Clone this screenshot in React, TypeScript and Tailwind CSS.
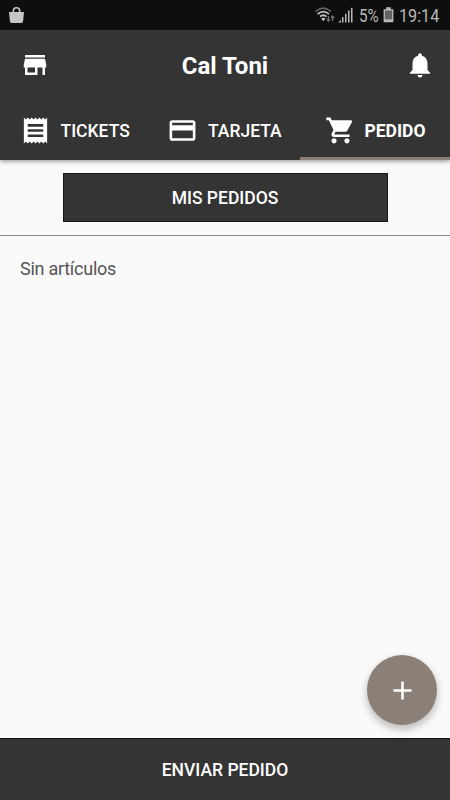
import React from "react";
import { MdStore, MdNotifications, MdReceipt, MdCreditCard, MdShoppingCart, MdAdd } from "react-icons/md";

function StatusBar() {
  return (
    <div className="flex h-[30px] items-center bg-[#0e0e0e] pl-[9px] pr-[10px] text-[#b9b9b9]">
      <svg width="15" height="17" viewBox="0 0 15 17" className="shrink-0">
        <path d="M0 5h15l-.9 9.2a2 2 0 0 1-2 1.8H2.9a2 2 0 0 1-2-1.8z" fill="#c6c6c6" />
        <path d="M4.3 6V4a3.2 3.2 0 0 1 6.4 0v2" fill="none" stroke="#c6c6c6" strokeWidth="1.6" />
      </svg>
      <svg width="20" height="16" viewBox="0 0 20 16" className="ml-auto shrink-0">
        <path d="M0.6 4.6Q8.3-2.4 16 4.6" fill="none" stroke="#666" strokeWidth="1.5" />
        <path d="M2.6 7.1Q8.3 2 14 7.1" fill="none" stroke="#c4c4c4" strokeWidth="1.7" />
        <path d="M5 9.7Q8.3 6.8 11.6 9.7" fill="none" stroke="#c4c4c4" strokeWidth="1.7" />
        <path d="M6.2 11.6Q8.3 9.8 10.4 11.6L8.3 14.2z" fill="#c4c4c4" />
        <path d="M13.4 9v5M11.7 12.2l1.7 2 1.7-2M17.6 14V9.3M15.9 11l1.7-2 1.7 2" fill="none" stroke="#707070" strokeWidth="1.2" />
      </svg>
      <svg width="15" height="16" viewBox="0 0 15 16" className="ml-[3px] shrink-0" fill="#b9b9b9">
        <path d="M0 15.5L3 13v2.5z" />
        <rect x="4" y="10" width="1.5" height="5.5" />
        <rect x="7" y="6.8" width="1.5" height="8.7" />
        <rect x="10" y="3.6" width="1.5" height="11.9" />
        <rect x="13" y="0.8" width="1.5" height="14.7" />
      </svg>
      <div className="ml-[6px] w-5 shrink-0">
        <span className="block origin-left scale-x-[0.82] whitespace-nowrap pt-px text-[18.5px] leading-[30px]">5%</span>
      </div>
      <svg width="11" height="16" viewBox="0 0 11 16" className="ml-[4px] shrink-0">
        <path d="M3.2 0.3h4.6v2H10.4v13H.6v-13H3.2z" fill="#b9b9b9" />
        <rect x="1.9" y="3.6" width="7.2" height="8.8" fill="#636363" />
      </svg>
      <div className="ml-[5px] w-[41px] shrink-0">
        <span className="block origin-left scale-x-[0.875] whitespace-nowrap pt-px text-[18.5px] leading-[30px]">19:14</span>
      </div>
    </div>
  );
}

export default function App() {
  const tabs = [
    { label: "TICKETS", Icon: MdReceipt, style: "pl-5 font-medium", gap: "ml-[9.5px]", active: false },
    { label: "TARJETA", Icon: MdCreditCard, style: "pl-[17px] font-medium", gap: "ml-[10px]", active: false },
    { label: "PEDIDO", Icon: MdShoppingCart, style: "pl-[25px] font-bold", gap: "ml-[8.5px]", active: true },
  ];

  return (
    <div className="relative flex h-[800px] w-[450px] flex-col overflow-hidden bg-[#fafafa] font-['Roboto',sans-serif]">
      <StatusBar />

      <header className="z-10 bg-[#343434] text-white shadow-[0_1px_5px_rgba(0,0,0,0.45)]">
        <div className="grid h-[70px] grid-cols-[60px_1fr_60px] items-center">
          <MdStore className="ml-5 size-[30px]" />
          <h1 className="pt-px text-center text-[24px] font-bold leading-none">Cal Toni</h1>
          <MdNotifications className="ml-[15px] size-[30px]" />
        </div>
        <nav className="grid h-[60px] grid-cols-3">
          {tabs.map(({ label, Icon, style, gap, active }) => (
            <div
              key={label}
              className={`flex items-center border-b-[3px] pt-[3px] text-[17.5px] ${style} ${active ? "border-[#8d8078]" : "border-transparent"}`}
            >
              <Icon className="size-[31px] shrink-0" />
              <span className={`pt-[2px] ${gap}`}>{label}</span>
            </div>
          ))}
        </nav>
      </header>

      <div className="flex h-[76px] justify-center border-b border-[#8b8b8b] pt-[13px]">
        <button className="h-[49px] w-[325px] border border-[#171717] bg-[#343434] pt-[2px] text-[17.5px] font-medium text-white">
          MIS PEDIDOS
        </button>
      </div>

      <main className="flex-1 px-5 pt-[21px]">
        <p className="text-[18px] leading-6 tracking-[-0.26px] text-[#555]">Sin artículos</p>
      </main>

      <button className="absolute bottom-[75px] right-[13px] flex size-[70px] items-center justify-center rounded-full bg-[#8b8077] text-white shadow-[0_4px_8px_rgba(0,0,0,0.28)]">
        <MdAdd className="size-[31px]" />
      </button>

      <footer className="h-[62px] shrink-0 border-t border-[#111] bg-[#343434] text-white">
        <button className="h-full w-full pt-[2px] text-[17.5px] font-medium">ENVIAR PEDIDO</button>
      </footer>
    </div>
  );
}
